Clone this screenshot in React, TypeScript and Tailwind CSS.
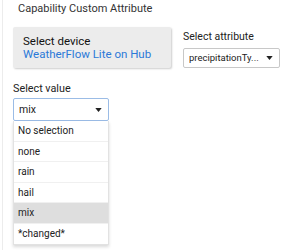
import React from 'react';

const options = ['No selection', 'none', 'rain', 'hail', 'mix', '*changed*'];

function Caret() {
  return (
    <svg width="7" height="4" viewBox="0 0 8 5" className="shrink-0">
      <path d="M0 0 L8 0 L4 5 Z" fill="#222" />
    </svg>
  );
}

export default function App() {
  return (
    <div className="w-[294px] h-[250px] bg-white pl-[2px] overflow-hidden" style={{ fontFamily: 'Roboto, "Noto Sans", sans-serif' }}>
      <div className="h-full border-l border-[#ececec] pl-[10px] text-[#212121]">
        {/* Title */}
        <div className="pl-[5px] pt-[1px] text-[11px] leading-[15px] text-[#333]">Capability Custom Attribute</div>

        {/* Device + attribute row */}
        <div className="flex items-start mt-[11px]">
          <div className="w-[158px] h-[41px] bg-[#ececec] rounded-[2px] shadow-[1px_1px_2px_rgba(0,0,0,0.2)] pl-[10px] pt-[7px]">
            <div className="text-[11.5px] leading-[15px] text-[#111]">Select device</div>
            <div className="text-[11.5px] leading-[15px] text-[#2b79d8] mt-[-2px]">WeatherFlow Lite on Hub</div>
          </div>
          <div className="ml-[12px] mt-[3px]">
            <div className="text-[10.5px] leading-[14px] text-[#222]">Select attribute</div>
            <div className="mt-[4px] w-[97px] h-[20px] border border-[#c8c8c8] rounded-[2px] flex items-center justify-between pl-[5px] pr-[6px]">
              <span className="text-[9.5px] text-[#222] whitespace-nowrap">precipitationTy...</span>
              <Caret />
            </div>
          </div>
        </div>

        {/* Select value */}
        <div className="mt-[14px] text-[10.8px] leading-[14px] text-[#222]">Select value</div>
        <div className="mt-[2px] w-[96px]">
          <div className="h-[23px] border border-[#9bbce6] rounded-[2px] flex items-center justify-between pl-[5px] pr-[6px]">
            <span className="text-[10.5px] text-[#222]">mix</span>
            <Caret />
          </div>
          <div className="border border-[#e2e2e2] border-t-0 shadow-[0_2px_3px_rgba(0,0,0,0.15)] bg-white">
            {options.map((o, i) => (
              <div
                key={o}
                className={`h-[20.5px] flex items-center pl-[4px] text-[10px] text-[#222] ${
                  i < options.length - 1 ? 'border-b border-[#f0f0f0]' : ''
                } ${o === 'mix' ? 'bg-[#dedede]' : ''}`}
              >
                {o}
              </div>
            ))}
          </div>
        </div>
      </div>
    </div>
  );
}
